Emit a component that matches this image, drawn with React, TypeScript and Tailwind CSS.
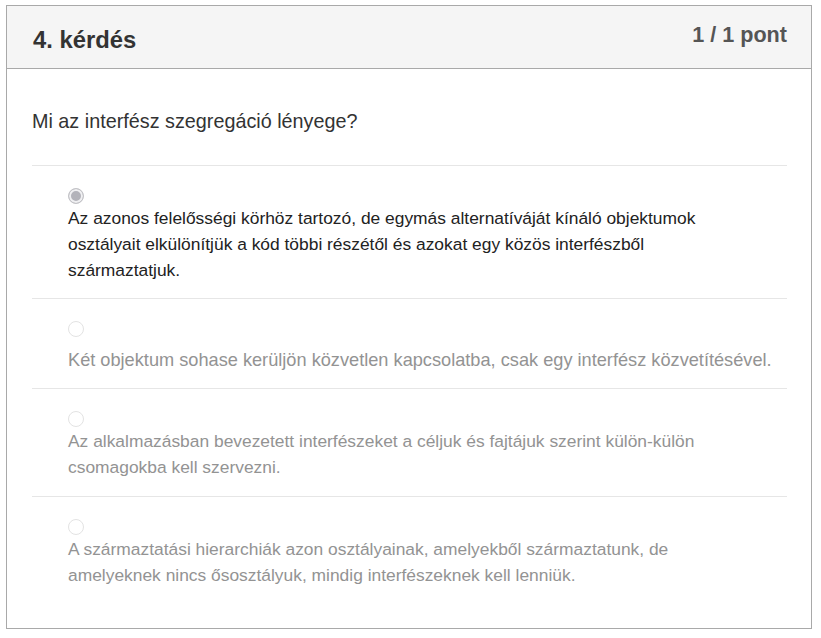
import React from "react";

const Radio = ({ checked }: { checked?: boolean }) =>
  checked ? (
    <span className="block w-[16px] h-[16px] rounded-full border border-[#c4c4c8] bg-[#b3b3ba] shadow-[inset_0_0_0_2px_#f0f0f2]" />
  ) : (
    <span className="block w-[16px] h-[16px] rounded-full border border-[#e3e3e3] bg-white" />
  );

const options: { lines: string[]; checked?: boolean; extra?: string; pb: string }[] = [
  {
    checked: true,
    pb: "pb-[15px]",
    extra: "text-[17.4px]",
    lines: [
      "Az azonos felelősségi körhöz tartozó, de egymás alternatíváját kínáló objektumok",
      "osztályait elkülönítjük a kód többi részétől és azokat egy közös interfészből",
      "származtatjuk.",
    ],
  },
  {
    pb: "pb-[15px]",
    extra: "mt-[9px] text-[18.2px]",
    lines: [
      "Két objektum sohase kerüljön közvetlen kapcsolatba, csak egy interfész közvetítésével.",
    ],
  },
  {
    pb: "pb-[16px]",
    extra: "text-[17.4px]",
    lines: [
      "Az alkalmazásban bevezetett interfészeket a céljuk és fajtájuk szerint külön-külön",
      "csomagokba kell szervezni.",
    ],
  },
  {
    pb: "pb-[16px]",
    extra: "text-[17.4px]",
    lines: [
      "A származtatási hierarchiák azon osztályainak, amelyekből származtatunk, de",
      "amelyeknek nincs ősosztályuk, mindig interfészeknek kell lenniük.",
    ],
  },
];

export default function App() {
  return (
    <div
      className="w-[821px] h-[638px] bg-white pt-[5px] pl-[6px]"
      style={{ fontFamily: '"Liberation Sans", Arial, sans-serif' }}
    >
      <div className="w-[806px] h-[624px] border border-[#a9a9a9] bg-white">
        <div className="h-[63px] bg-[#f5f5f5] border-b border-[#a9a9a9] flex justify-between items-start pl-[26px] pr-[24px]">
          <div className="pt-[20px] text-[23.8px] leading-[28px] font-bold text-[#333]">
            4. kérdés
          </div>
          <div className="pt-[17px] text-[21.6px] leading-[24px] font-bold text-[#555]">
            1 / 1 pont
          </div>
        </div>
        <div className="pl-[25px] pr-[24px]">
          <div className="pt-[40px] pb-[32px] text-[19.8px] leading-[24px] text-[#333]">
            Mi az interfész szegregáció lényege?
          </div>
          <div className="flex flex-col">
            {options.map((o, i) => (
              <div
                key={i}
                className={`border-t border-[#e6e6e6] pt-[22px] pl-[36px] ${o.pb}`}
              >
                <div className="h-[17px]">
                  <Radio checked={o.checked} />
                </div>
                <div
                  className={`leading-[26px] ${
                    o.checked ? "text-[#222]" : "text-[#939393]"
                  } ${o.extra}`}
                >
                  {o.lines.map((l, j) => (
                    <div key={j} className="whitespace-nowrap">
                      {l}
                    </div>
                  ))}
                </div>
              </div>
            ))}
          </div>
        </div>
      </div>
    </div>
  );
}
